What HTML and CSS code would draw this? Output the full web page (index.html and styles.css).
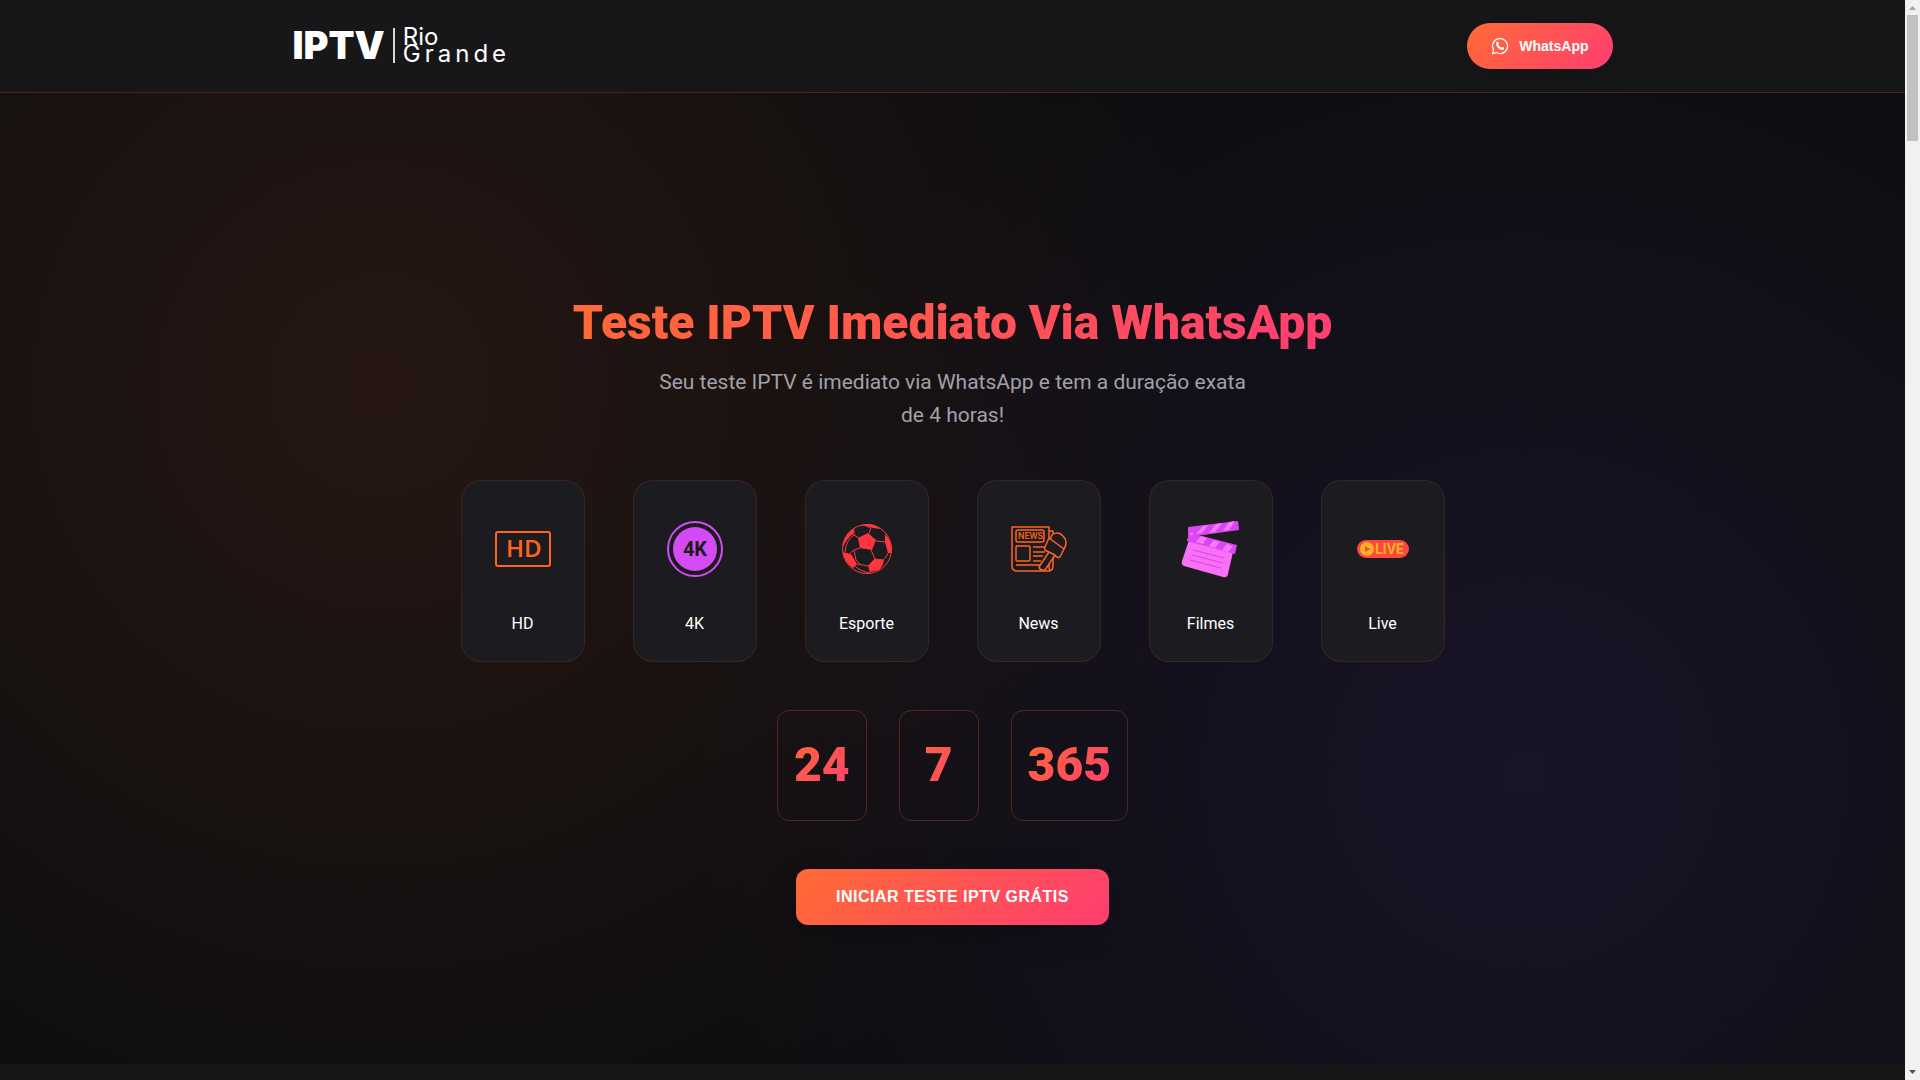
FILE: index.html
```html
<!DOCTYPE html>
<html lang="pt-BR">

<head>
  <meta charset="UTF-8">
  <meta name="viewport" content="width=device-width, initial-scale=1.0">
  <title>IPTV Rio Grande</title>
  <link rel="stylesheet" href="styles.css">
</head>

<body>
  <div class="page">
    <header class="header">
      <div class="container header-content">
        <a href="#" class="logo">
          <span class="logo-bold">IPTV</span>
          <span class="logo-divider"></span>
          <span class="logo-name">
            <span>Rio</span>
            <span class="logo-wide">Grande</span>
          </span>
        </a>
        <button type="button" class="btn-whatsapp">
          <svg viewBox="0 0 18 18" width="18" height="18" fill="none" stroke="#fff" stroke-width="1.2">
            <path d="M1.5 16.6 2.5 12.8A7.5 7.5 0 1 1 5.300 15.600Z" />
            <path d="M6.100 4.800 7 4.600 8 6.800 7.400 7.900Q8.200 9.700 10.300 10.600L11.300 9.900 13.300 11Q13 13 11 13 8.600 12.800 6.600 10.500 4.300 7.800 5.200 5.700Z" fill="#fff" stroke="none" />
          </svg>
          <span>WhatsApp</span>
        </button>
      </div>
    </header>

    <main class="hero">
      <div class="hero-content">
        <h1>Teste IPTV Imediato Via WhatsApp</h1>
        <p class="subtitle">Seu teste IPTV é imediato via WhatsApp e tem a duração exata de 4 horas!</p>

        <div class="features">
          <div class="feature">
            <svg class="feature-icon" viewBox="0 0 60 60">
              <rect x="3" y="13" width="54" height="34" rx="2" fill="none" stroke="#ff6320" stroke-width="2" />
              <text class="icon-hd" x="13" y="38">HD</text>
            </svg>
            <span>HD</span>
          </div>
          <div class="feature">
            <svg class="feature-icon" viewBox="0 0 60 60">
              <circle cx="30" cy="30" r="27" fill="none" stroke="#d44bf5" stroke-width="2" />
              <circle cx="30" cy="30" r="22" fill="#d44bf5" />
              <text class="icon-4k" x="30" y="37">4K</text>
            </svg>
            <span>4K</span>
          </div>
          <div class="feature">
            <svg class="feature-icon" viewBox="0 0 60 60">
              <g fill="none" stroke="#ff3640" stroke-width="1">
                <circle cx="30" cy="30" r="24.500" />
                <path d="M22 19 17 16M39 22 48 23M34 31 38 40M23 29 17 31M32 14 34 9M17 16 17 12M17 16Q9 21 8 33M17 31 13 34M17 31 19 41 24 46M38 40 31 47 20 45M38 40 46 41Q50 38 51 34M18 47Q24 53 34 54M34 9 27 6" />
              </g>
              <g fill="#ff3640">
                <path d="M31 14 39 21 35 31 23 29 21 19Z" />
                <path d="M6 25Q8 14 18 9L16 15Q10 19 6 28Z" />
                <path d="M48 15Q55 22 55 34L51 34 48 23Z" />
                <path d="M6 33 14 35 20 45 16 49Q7 43 6 33Z" />
                <path d="M38 40 47 41Q46 47 42 51L33 53 31 47Z" />
                <path d="M22 7Q34 2 44 10L36 9Q30 6 22 7Z" />
              </g>
            </svg>
            <span>Esporte</span>
          </div>
          <div class="feature">
            <svg class="feature-icon" viewBox="0 0 60 60" fill="none" stroke="#ff6320" stroke-width="1.500" stroke-linejoin="round">
              <path d="M40 24V8H3V47Q3 52 8 52H39Q44 52 44 47V37M40 12H44V16M40 45V49Q40 51 42 52" />
              <rect x="7" y="11" width="28" height="12" rx="2" />
              <text class="icon-news" x="9" y="20">NEWS</text>
              <rect x="7" y="27" width="14" height="15" rx="1" />
              <path d="M24 28H37M24 33H36M24 37H34M24 42H32M7 46H31" />
              <path d="M42 23C40 13 50 12 54 17 58 21 58 27 54 31Z" fill="#1c1c20" />
              <path d="M40 19 55 30 51 38Q50 39 48 38L36 31Q35 30 36 28Z" fill="#1c1c20" />
              <path d="M40 33 46 36 36 51Q31 52 30 48Z" fill="#1c1c20" />
            </svg>
            <span>News</span>
          </div>
          <div class="feature">
            <svg class="feature-icon" viewBox="0 0 60 60">
              <path d="M8 21 52 33 47 55Q46 59 42 58L3 47Q0 46 1 42Z" fill="#f96ff5" />
              <path d="M6 20 13 15 56 26 54 35 6 22Z" fill="#da46f5" />
              <path d="M7 8 57 2 58 11 15 17 7 22Z" fill="#da46f5" />
              <path d="M22 7 27 6 21 14 15 15ZM35 5 41 4 34 13 28 14ZM48 3 54 2 48 11 42 12ZM20 17 26 19 22 25 15 23ZM33 21 39 23 34 29 28 27ZM46 25 52 27 47 33 41 31Z" fill="#f57af7" />
              <circle cx="10.500" cy="15" r="1.500" fill="#f57af7" />
              <path d="M12 31 43 39M11 36 42 44M9 41 40 49" fill="none" stroke="#d943eb" stroke-width="1" />
            </svg>
            <span>Filmes</span>
          </div>
          <div class="feature">
            <svg class="feature-icon" viewBox="0 0 60 60">
              <rect x="4" y="21" width="52" height="18" rx="9" fill="#ff4640" />
              <circle cx="14" cy="30" r="7" fill="#ffb322" />
              <path d="M12 27 17.500 30 12 33Z" fill="#ff4640" />
              <text class="icon-live" x="22" y="35">LIVE</text>
            </svg>
            <span>Live</span>
          </div>
        </div>

        <div class="stats">
          <div class="stat"><span>24</span></div>
          <div class="stat"><span>7</span></div>
          <div class="stat"><span>365</span></div>
        </div>

        <button type="button" class="btn-start">INICIAR TESTE IPTV GRÁTIS</button>
      </div>
    </main>
    <div class="next-section"></div>
  </div>
  <div class="scrollbar" aria-hidden="true">
    <svg viewBox="0 0 15 15" width="15" height="15" fill="#a3a3a3"><path d="M4 10 7.500 6 11 10Z" /></svg>
    <div class="scroll-track"><div class="scroll-thumb"></div></div>
    <svg viewBox="0 0 15 15" width="15" height="15" fill="#505050"><path d="M4 5 7.500 9 11 5Z" /></svg>
  </div>
</body>

</html>
```
FILE: styles.css
```css
* {
  margin: 0;
  padding: 0;
  box-sizing: border-box;
}

body {
  display: flex;
  height: 100vh;
  overflow: hidden;
  font-family: Roboto, sans-serif;
  line-height: 1.6;
  background: #0a0a0b;
  color: #fff;
}

.page {
  flex: 1;
  display: flex;
  flex-direction: column;
}

.container {
  max-width: 1400px;
  margin: 0 auto;
  padding: 0 40px;
}

.header {
  background: #171719;
  border-bottom: 1px solid rgba(255, 107, 53, 0.2);
}

.header-content {
  display: flex;
  justify-content: space-between;
  align-items: center;
  height: 92px;
}

.logo {
  display: flex;
  align-items: center;
  gap: 8px;
  padding-bottom: 2px;
  color: #fff;
  text-decoration: none;
}

.logo-bold {
  font: 900 38px/48px Inter, sans-serif;
}

.logo-divider {
  width: 2px;
  height: 35px;
  background: #d8d8d8;
}

.logo-name {
  display: flex;
  flex-direction: column;
  font: 400 24px/17px Inter, sans-serif;
}

.logo-wide {
  letter-spacing: 4px;
}

.btn-whatsapp {
  display: flex;
  align-items: center;
  gap: 10px;
  height: 46px;
  padding: 0 24px;
  border: none;
  border-radius: 50px;
  background: linear-gradient(135deg, #ff6b35, #ff3d71);
  box-shadow: 0 4px 32px rgba(0, 0, 0, 0.2);
  color: #fff;
  font: 700 14px "Liberation Sans", sans-serif;
}

.hero {
  flex: 1;
  display: flex;
  align-items: center;
  justify-content: center;
  padding: 62px 20px 0;
  background:
    radial-gradient(circle at 20% 30%, rgba(255, 107, 53, 0.1) 0%, transparent 50%),
    radial-gradient(circle at 80% 70%, rgba(124, 77, 255, 0.1) 0%, transparent 50%),
    #0d0d0f;
}

.hero-content {
  display: flex;
  flex-direction: column;
  align-items: center;
  text-align: center;
}

h1 {
  font-size: 48px;
  font-weight: 900;
  line-height: 58px;
  margin-bottom: 14px;
  background: linear-gradient(135deg, #ff6b35, #ff3d71);
  -webkit-background-clip: text;
  background-clip: text;
  color: transparent;
}

.subtitle {
  max-width: 600px;
  font-size: 21px;
  line-height: 33px;
  margin-bottom: 48px;
  color: #a1a1aa;
}

.features {
  display: flex;
  gap: 48px;
  margin-bottom: 48px;
}

.feature {
  display: flex;
  flex-direction: column;
  align-items: center;
  width: 124px;
  height: 182px;
  padding: 38px 0 24px;
  justify-content: space-between;
  border: 1px solid rgba(255, 107, 53, 0.12);
  border-radius: 20px;
  background: #1c1c20;
  font-size: 16px;
}

.feature-icon {
  width: 60px;
  height: 60px;
}

.icon-hd {
  font: 600 24px "Open Sans", sans-serif;
  fill: #ff6320;
}

.icon-4k {
  font: 700 20px Roboto, sans-serif;
  text-anchor: middle;
  fill: #1c1c20;
}

.icon-news {
  font: 500 9px Roboto, sans-serif;
  fill: #ff6320;
  stroke: none;
}

.icon-live {
  font: 700 14px Roboto, sans-serif;
  fill: #ffb322;
}

.stats {
  display: flex;
  gap: 32px;
  margin-bottom: 48px;
}

.stat {
  min-width: 80px;
  height: 111px;
  padding: 16px;
  border: 1px solid rgba(255, 107, 53, 0.25);
  border-radius: 12px;
}

.stat span {
  display: block;
  font-size: 48px;
  font-weight: 900;
  line-height: 76px;
  background: linear-gradient(135deg, #ff6b35, #ff3d71);
  -webkit-background-clip: text;
  background-clip: text;
  color: transparent;
}

.btn-start {
  height: 56px;
  padding: 0 40px;
  border: none;
  border-radius: 12px;
  background: linear-gradient(135deg, #ff6b35, #ff3d71);
  box-shadow: 0 8px 32px rgba(0, 0, 0, 0.2);
  color: #fff;
  font: 700 16px "Liberation Sans", sans-serif;
  letter-spacing: 0.5px;
}

.next-section {
  height: 16px;
  background: #171719;
}

.scrollbar {
  display: flex;
  flex-direction: column;
  width: 15px;
  background: #f1f1f1;
}

.scroll-track {
  flex: 1;
  padding: 0 2px;
}

.scroll-thumb {
  height: 12%;
  background: #c1c1c1;
}
```
